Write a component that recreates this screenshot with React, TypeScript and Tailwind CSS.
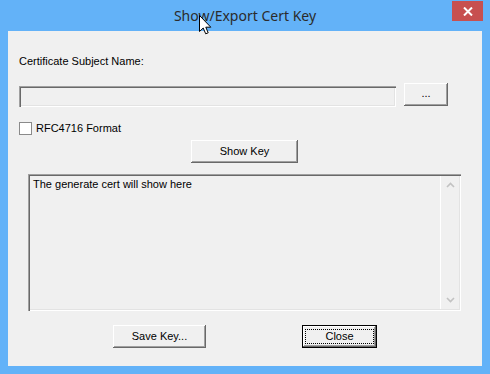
import { useState } from "react";

// classic 3D bevels
const raised =
  "bg-[#f0f0f0] shadow-[inset_-1px_-1px_#696969,inset_1px_1px_#ffffff,inset_-2px_-2px_#a0a0a0]";
const sunken =
  "bg-[#f0f0f0] shadow-[inset_1px_1px_#a0a0a0,inset_2px_2px_#696969,inset_-1px_-1px_#ffffff,inset_-2px_-2px_#e3e3e3]";

function ChevronUp() {
  return (
    <svg width="9" height="6" viewBox="0 0 9 6">
      <path d="M1 5 L4.5 1.5 L8 5" fill="none" stroke="#c2c2c2" strokeWidth="1.6" />
    </svg>
  );
}

function ChevronDown() {
  return (
    <svg width="9" height="6" viewBox="0 0 9 6">
      <path d="M1 1 L4.5 4.5 L8 1" fill="none" stroke="#c2c2c2" strokeWidth="1.6" />
    </svg>
  );
}

export default function App() {
  const [subject, setSubject] = useState("");
  const [rfc, setRfc] = useState(false);

  return (
    <div
      className="relative w-[490px] h-[374px] bg-[#63b2f8] flex flex-col text-[11px] leading-[13px] text-black"
      style={{ fontFamily: '"Liberation Sans", Arial, sans-serif' }}
    >
      {/* title bar */}
      <div className="h-[31px] grid grid-cols-[1fr_auto_1fr] shrink-0">
        <div />
        <div
          className="pt-[6px] text-[14px] leading-[20px] text-[#2b2b2b]"
          style={{ fontFamily: '"Noto Sans", "Open Sans", sans-serif' }}
        >
          Show/Export Cert Key
        </div>
        <div className="flex justify-end pr-[7px] pt-[1px]">
          <button className="w-[31px] h-[20px] bg-[#c75050] flex items-center justify-center">
            <svg width="10" height="9" viewBox="0 0 10 9">
              <path d="M1 0.5 L9 8.5 M9 0.5 L1 8.5" stroke="#ffffff" strokeWidth="2" />
            </svg>
          </button>
        </div>
      </div>

      {/* client area */}
      <div className="mx-[8px] h-[335px] bg-[#f0f0f0] flex flex-col pl-[11px]">
        <div className="mt-[24px]">Certificate Subject Name:</div>

        <div className="mt-[15px] flex items-start">
          <input
            value={subject}
            onChange={(e) => setSubject(e.target.value)}
            className={`mt-[3px] w-[377px] h-[21px] px-[4px] outline-none ${sunken}`}
          />
          <button className={`ml-[8px] w-[44px] h-[23px] pb-[3px] ${raised}`}>...</button>
        </div>

        <label className="mt-[15px] flex items-center gap-[4px] h-[13px]">
          <span
            onClick={() => setRfc(!rfc)}
            className="w-[13px] h-[13px] border border-[#8a8a8a] bg-white flex items-center justify-center text-[10px]"
          >
            {rfc ? "✓" : ""}
          </span>
          RFC4716 Format
        </label>

        <button className={`mt-[5px] ml-[172px] w-[107px] h-[23px] ${raised}`}>Show Key</button>

        <div className={`mt-[11px] ml-[9px] w-[433px] h-[137px] flex ${sunken}`}>
          <div className="flex-1 pl-[5px] pt-[4px]">The generate cert will show here</div>
          <div className="w-[19px] mt-[2px] mb-[2px] mr-[2px] border-l border-[#ffffff] flex flex-col items-center justify-between py-[6px]">
            <ChevronUp />
            <ChevronDown />
          </div>
        </div>

        <div className="mt-[14px] flex">
          <button className={`ml-[94px] w-[93px] h-[23px] ${raised}`}>Save Key...</button>
          <button className="ml-[96px] w-[75px] h-[23px] border border-black p-0">
            <div className={`w-full h-full flex items-center justify-center ${raised}`}>
              <div className="w-[69px] h-[15px] border border-dotted border-black flex items-center justify-center leading-[11px]">
                Close
              </div>
            </div>
          </button>
        </div>
      </div>

      {/* mouse pointer */}
      <svg
        className="absolute left-[199px] top-[15px]"
        width="13"
        height="20"
        viewBox="0 0 13 20"
      >
        <path
          d="M0.5 0.5 L0.5 16.5 L4.2 13 L6.7 18.8 L9.2 17.8 L6.8 12.2 L11.8 12.2 Z"
          fill="#ffffff"
          stroke="#000000"
          strokeWidth="1"
        />
      </svg>
    </div>
  );
}
